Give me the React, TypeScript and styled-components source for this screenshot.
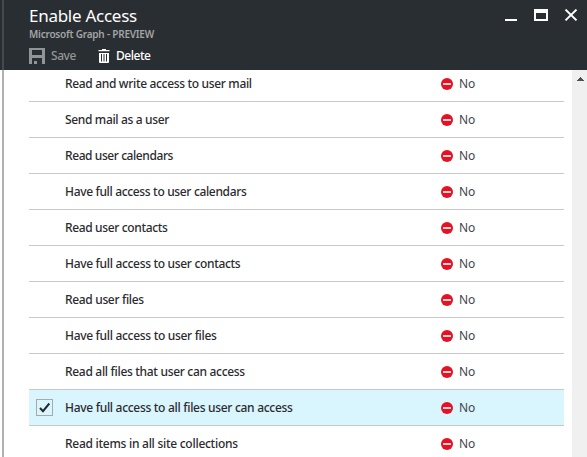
import React from "react";
import styled, { createGlobalStyle } from "styled-components";

const GlobalStyle = createGlobalStyle`
  * { box-sizing: border-box; }
  body { margin: 0; background: #fff; overflow: hidden; }
`;

const Blade = styled.div`
  display: flex;
  flex-direction: column;
  width: 587px;
  height: 457px;
  overflow: hidden;
  background: #fff;
  font-family: "Noto Sans", "Open Sans", sans-serif;
  font-size: 12px;
`;

const Header = styled.header`
  display: flex;
  justify-content: space-between;
  flex: none;
  height: 70px;
  background: linear-gradient(#45494c, #45494c) 2px 0 / 2px 100% no-repeat #292e32;
  padding-left: 29px;
`;

const Heading = styled.div`
  display: flex;
  flex-direction: column;
`;

const Title = styled.h1`
  margin: 5px 0 0;
  height: 22px;
  font-size: 17px;
  line-height: 22px;
  font-weight: 400;
  letter-spacing: -0.27px;
  color: #fff;
  white-space: nowrap;
`;

const Subtitle = styled.div`
  height: 14px;
  font-size: 10px;
  line-height: 14px;
  font-weight: 600;
  letter-spacing: -0.22px;
  color: #a2a4a6;
  white-space: nowrap;
`;

const Commands = styled.div`
  display: flex;
  align-items: center;
  height: 18px;
  margin-top: 6px;
`;

const Command = styled.button<{ $disabled?: boolean; $gap: number }>`
  display: flex;
  align-items: center;
  gap: ${(p) => p.$gap}px;
  height: 18px;
  padding: 0;
  margin-right: 22px;
  border: 0;
  background: none;
  font: 500 12px/18px "Noto Sans", sans-serif;
  letter-spacing: -0.45px;
  color: ${(p) => (p.$disabled ? "#929597" : "#fff")};
`;

const WindowControls = styled.div`
  display: flex;
  padding: 9px 10px 0 0;
  height: 22px;
`;

const Body = styled.div`
  display: flex;
  flex: 1;
  min-height: 0;
  border-left: 2px solid #fff;
`;

const Content = styled.main`
  flex: 1;
  overflow: hidden;
  border-left: 2px solid #b1b1b1;
  padding: 0 8px 0 25px;
`;

const List = styled.div`
  margin-top: -4px;
`;

const Row = styled.div<{ $selected?: boolean }>`
  display: grid;
  grid-template-columns: 36px 376px 1fr;
  align-items: center;
  height: 36px;
  border-bottom: 1px solid #c8c8c8;
  background: ${(p) => (p.$selected ? "#d9f5fe" : "#fff")};
`;

const CheckCell = styled.div`
  display: flex;
  padding-left: 7px;
`;

const CheckBox = styled.span`
  display: block;
  width: 17px;
  height: 17px;
  border: 1px solid #a9a9a9;
  svg { display: block; }
`;

const Label = styled.span<{ $spacing: number }>`
  font-weight: 500;
  line-height: 18px;
  padding-top: 1px;
  letter-spacing: ${(p) => p.$spacing}px;
  color: #2b2b2f;
  white-space: nowrap;
`;

const Status = styled.span`
  display: flex;
  align-items: center;
  gap: 6px;
  line-height: 18px;
  color: #45454b;
`;

const StatusText = styled.span`
  padding-top: 1px;
`;

const Scrollbar = styled.div`
  width: 15px;
  background: #f0f0f0;
  padding: 7px 0 0 5px;
  svg { display: block; }
`;

const SaveIcon = () => (
  <svg width="16" height="16" viewBox="0 0 16 16" shapeRendering="crispEdges">
    <path fill="#929597" d="M0 0h15l1 1v15h-3v-6H3v6H0zM3 2v5h10V2z" fillRule="evenodd" />
    <path fill="#929597" d="M5 13h3v3H5z" />
  </svg>
);

const TrashIcon = () => (
  <svg width="12" height="14" viewBox="0 0 12 14">
    <path fill="#fff" d="M4 0h4v1h3.500v1.300H.5V1H4z" />
    <path fill="#fff" d="M1 4h10v9q0 1-1 1H2q-1 0-1-1z" />
    <path stroke="#292e32" strokeWidth="1" d="M3.500 5v7.500M6 5v7.500M8.500 5v7.500" />
  </svg>
);

const WindowIcons = () => (
  <svg width="72" height="13" viewBox="0 0 72 13">
    <path fill="#fff" shapeRendering="crispEdges" d="M0 10h12v2H0zM29 0h14v12H29zM31 4v6h10V4z" fillRule="evenodd" />
    <path stroke="#fff" strokeWidth="2" d="M60.500 .6l11 10.800M71.500 .6l-11 10.800" />
  </svg>
);

const NoIcon = () => (
  <svg width="12" height="12" viewBox="0 0 12 12">
    <circle cx="6" cy="6" r="6" fill="#e81123" />
    <path fill="#fbd4d8" d="M2 5h8v2H2z" />
  </svg>
);

const permissions = [
  { label: "Read and write access to user mail", spacing: -0.33 },
  { label: "Send mail as a user", spacing: -0.34 },
  { label: "Read user calendars", spacing: -0.42 },
  { label: "Have full access to user calendars", spacing: -0.34 },
  { label: "Read user contacts", spacing: -0.36 },
  { label: "Have full access to user contacts", spacing: -0.32 },
  { label: "Read user files", spacing: -0.34 },
  { label: "Have full access to user files", spacing: -0.31 },
  { label: "Read all files that user can access", spacing: -0.31 },
  { label: "Have full access to all files user can access", spacing: -0.3, selected: true },
  { label: "Read items in all site collections", spacing: -0.27 },
];

export default function App() {
  return (
    <Blade>
      <GlobalStyle />
      <Header>
        <Heading>
          <Title>Enable Access</Title>
          <Subtitle>Microsoft Graph - PREVIEW</Subtitle>
          <Commands>
            <Command $disabled $gap={6}><SaveIcon />Save</Command>
            <Command $gap={6}><TrashIcon />Delete</Command>
          </Commands>
        </Heading>
        <WindowControls><WindowIcons /></WindowControls>
      </Header>
      <Body>
        <Content>
          <List>
            {permissions.map((p) => (
              <Row key={p.label} $selected={p.selected}>
                <CheckCell>
                  {p.selected && (
                    <CheckBox>
                      <svg width="15" height="15" viewBox="0 0 15 15">
                        <path fill="none" stroke="#252b30" strokeWidth="2" d="M3 8l3 3.200L12.300 3.500" />
                      </svg>
                    </CheckBox>
                  )}
                </CheckCell>
                <Label $spacing={p.spacing}>{p.label}</Label>
                <Status><NoIcon /><StatusText>No</StatusText></Status>
              </Row>
            ))}
          </List>
        </Content>
        <Scrollbar>
          <svg width="7" height="4" viewBox="0 0 7 4" shapeRendering="crispEdges">
            <path fill="#505050" d="M3 0h1v1h1v1h1v1h1v1H0V3h1V2h1V1h1z" />
          </svg>
        </Scrollbar>
      </Body>
    </Blade>
  );
}
